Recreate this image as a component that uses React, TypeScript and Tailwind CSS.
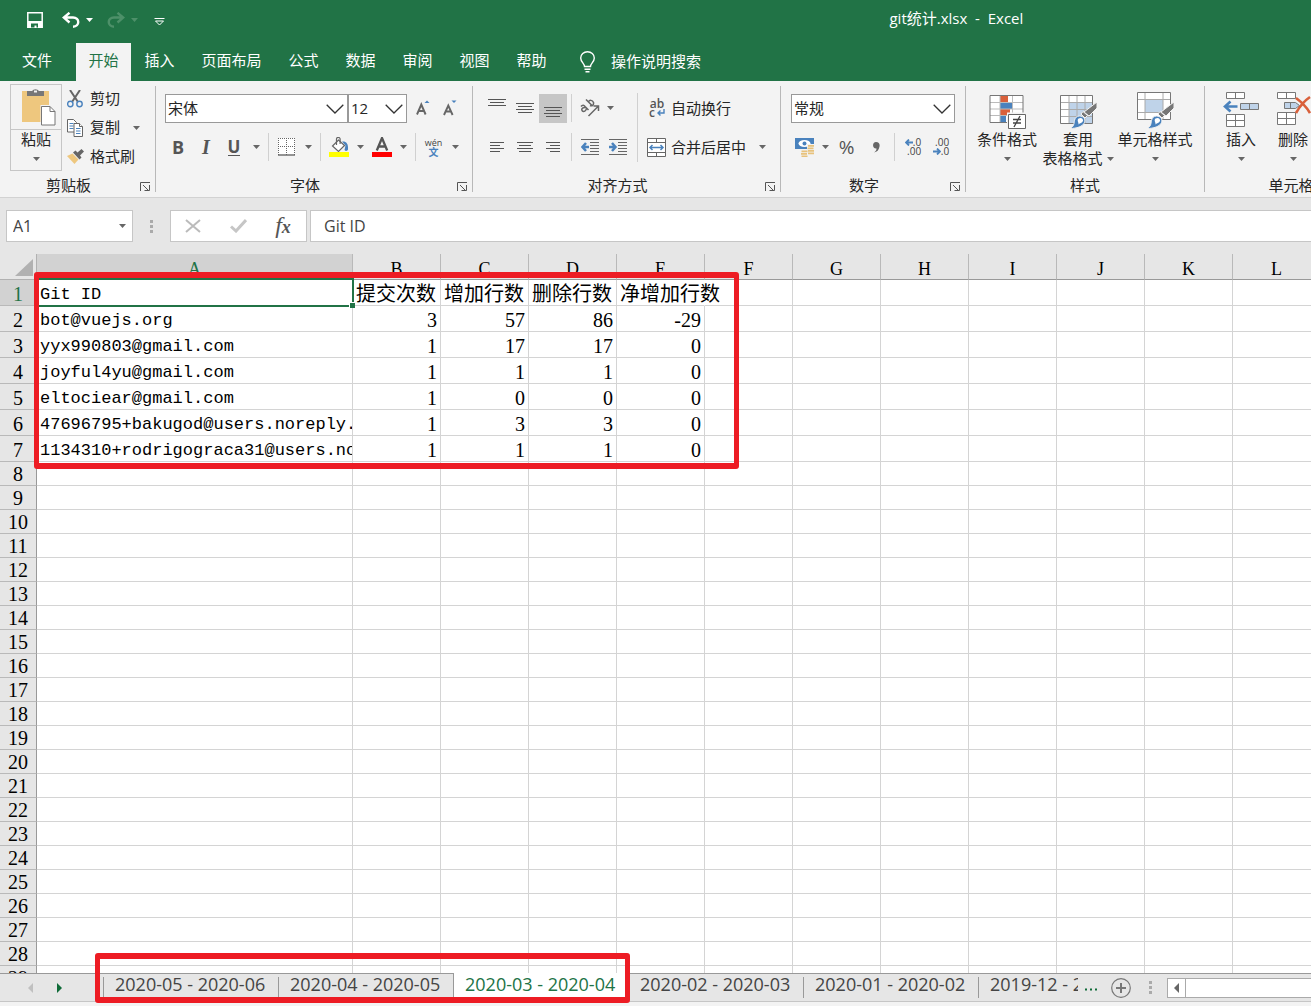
import { ReactNode } from "react";
import clsx from "clsx";

interface IChildren {
  children?: ReactNode;
}

interface IButtonProps extends IChildren {
  label: string;
  className?: string;
}

const COLUMNS = ["A", "B", "C", "D", "E", "F", "G", "H", "I", "J", "K", "L"];

const ROWS: string[][] = [
  ["Git ID", "提交次数", "增加行数", "删除行数", "净增加行数"],
  ["bot@vuejs.org", "3", "57", "86", "-29"],
  ["yyx990803@gmail.com", "1", "17", "17", "0"],
  ["joyful4yu@gmail.com", "1", "1", "1", "0"],
  ["eltociear@gmail.com", "1", "0", "0", "0"],
  ["47696795+bakugod@users.noreply.github.com", "1", "3", "3", "0"],
  ["1134310+rodrigograca31@users.noreply.github.com", "1", "1", "1", "0"],
];

const ROW_COUNT = 29;

const SHEETS = [
  "2020-05 - 2020-06",
  "2020-04 - 2020-05",
  "2020-03 - 2020-04",
  "2020-02 - 2020-03",
  "2020-01 - 2020-02",
];

const ACTIVE_SHEET = 2;

const MENU = ["公式", "数据", "审阅", "视图", "帮助"];

/* ---------- small pieces ---------- */

const CaretIcon = () => (
  <svg width="7" height="4" viewBox="0 0 7 4" className="shrink-0" fill="currentColor">
    <path d="M0 0h7L3.5 4z" />
  </svg>
);

const Caret = ({ label }: { label: string }) => (
  <button aria-label={label} className="flex h-7 w-3 shrink-0 items-center justify-center text-[#666]">
    <CaretIcon />
  </button>
);

const IconButton = ({ label, className, children }: IButtonProps) => (
  <button aria-label={label} className={clsx("flex h-7 shrink-0 items-center justify-center", className ?? "w-[31px]")}>
    {children}
  </button>
);

const Divider = ({ className }: { className?: string }) => (
  <span className={clsx("h-7 w-px shrink-0 bg-[#d0d0d0]", className ?? "mr-0.5 ml-1.5")} />
);

const Launcher = ({ label }: { label: string }) => (
  <button aria-label={label} className="mr-0.5 flex h-4 w-4 items-center justify-center pt-0.5">
    <svg width="10" height="9" viewBox="0 0 10 9" fill="none" stroke="#555">
      <path d="M.5 9V.5H10" />
      <path d="M3 3l5 5M9.500 3v5.500H4.500" />
    </svg>
  </button>
);

interface IGroupProps extends IChildren {
  title: string;
  className: string;
  launcher?: boolean;
}

const Group = ({ title, className, launcher, children }: IGroupProps) => (
  <section className={clsx("flex shrink-0 flex-col", className)}>
    <div className="h-24">{children}</div>
    <div className="flex h-4 items-center">
      <h2 className="flex-1 text-center text-[15px] leading-4">{title}</h2>
      {launcher && <Launcher label={`${title}设置`} />}
    </div>
  </section>
);

const GroupLine = () => <span className="mt-[5px] h-[106px] w-px shrink-0 bg-[#b8b8b8]" />;

interface IComboProps {
  label: string;
  value: string;
  className: string;
}

const Combo = ({ label, value, className }: IComboProps) => (
  <div className={clsx("relative shrink-0", className)}>
    <select
      aria-label={label}
      defaultValue={value}
      className="h-[29px] w-full appearance-none rounded-none border border-[#999] bg-white px-0.5 text-[15px] leading-5"
    >
      <option>{value}</option>
    </select>
    <svg
      width="18"
      height="10"
      viewBox="0 0 18 10"
      fill="none"
      stroke="#333"
      strokeWidth="1.300"
      className="pointer-events-none absolute top-2.5 right-1"
    >
      <path d="M.7.7L9 9 17.300.7" />
    </svg>
  </div>
);

/* ---------- title bar and tabs ---------- */

const TitleBar = () => (
  <header className="flex h-10 shrink-0 items-center bg-[#217346] text-white">
    <div className="flex w-[68%] shrink-0 items-center pl-[27px]">
      <button aria-label="保存">
        <svg width="16" height="16" viewBox="0 0 16 16" fill="none" stroke="#fff" strokeWidth="1.500">
          <path d="M.8.8h14.400v14.400H.8z" />
          <path d="M1 9.800h14" strokeWidth="1.600" />
          <path d="M1 10h14v5.500H1z" fill="#fff" stroke="none" />
          <path d="M4 11.500h7v4H9.500v-2h-2v2H4z" fill="#217346" stroke="none" />
        </svg>
      </button>
      <button aria-label="撤消" className="ml-[19px]">
        <svg width="18" height="16" viewBox="0 0 18 16" fill="none" stroke="#fff" strokeWidth="2.400">
          <path d="M7.500.8L1.800 5.500l5.700 5M2 5.500h9c7 0 7 9 0 9.200" />
        </svg>
      </button>
      <button aria-label="撤消列表" className="ml-1.5">
        <CaretIcon />
      </button>
      <button aria-label="恢复" className="ml-[14px] text-[#4d9069]">
        <svg width="18" height="16" viewBox="0 0 18 16" fill="none" stroke="currentColor" strokeWidth="2.400">
          <path d="M10.500.8l5.700 4.700-5.700 5M16 5.500H7c-7 0-7 9 0 9.200" />
        </svg>
      </button>
      <button aria-label="恢复列表" className="ml-1.5 text-[#4d9069]">
        <CaretIcon />
      </button>
      <button aria-label="自定义快速访问工具栏" className="ml-4 pt-1">
        <svg width="11" height="8" viewBox="0 0 11 8" fill="none" stroke="#fff">
          <path d="M.5.500h10M1.500 3h8l-4 4z" />
        </svg>
      </button>
    </div>
    <h1 className="-mt-1 -ml-0.5 text-[15px] whitespace-pre">{"git统计.xlsx  -  Excel"}</h1>
  </header>
);

const MenuTab = ({ name, className }: { name: string; className?: string }) => (
  <button className={clsx("h-[38px] shrink-0 pb-1 whitespace-nowrap", className ?? "w-[57px]")}>{name}</button>
);

const MenuBar = () => (
  <nav className="flex h-[41px] shrink-0 items-end bg-[#217346] text-[15px] text-white">
    <MenuTab name="文件" className="mr-0.5 w-[74px]" />
    <MenuTab name="开始" className="w-[55px] bg-[#f3f3f3] text-[#217346]" />
    <MenuTab name="插入" />
    <MenuTab name="页面布局" className="w-[87px]" />
    {MENU.map((name) => (
      <MenuTab key={name} name={name} />
    ))}
    <button className="ml-5 flex h-[38px] items-center gap-4 pb-px whitespace-nowrap">
      <svg width="15" height="22" viewBox="0 0 15 22" fill="none" stroke="#fff" strokeWidth="1.400">
        <path d="M4.500 15.500c0-3-3.800-4.500-3.800-8.500a6.800 6.300 0 0 1 13.600 0c0 4-3.800 5.500-3.800 8.500z" />
        <path d="M4.500 18.200h6M5.500 20.800h4" />
      </svg>
      操作说明搜索
    </button>
  </nav>
);

/* ---------- ribbon groups ---------- */

const Clipboard = () => (
  <Group title="剪贴板" launcher className="w-[155px]">
    <div className="flex pt-[3px] pl-2.5">
      <button className="flex h-[87px] w-[52px] flex-col items-center border border-[#c6c6c6] text-[15px]">
        <span className="flex h-[45px] w-full items-center justify-center border-b border-[#c6c6c6]">
          <svg width="34" height="38" viewBox="0 0 34 38" className="ml-1.5">
            <path d="M0 3h27v31H0z" fill="#eec77e" />
            <path d="M5 3h5a4 3.500 0 0 1 7 0h5v5H5z" fill="#777" />
            <path d="M12 2.500h3v2h-3z" fill="#f3f3f3" />
            <path d="M18.500 17H29l5.500 5.500V38h-16z" fill="#f3f3f3" />
            <path d="M19.500 18.500h8.500l5 5v13.500H19.500z" fill="#fff" stroke="#777" />
            <path d="M28 18.500v5h5" fill="none" stroke="#777" />
          </svg>
        </span>
        <span className="leading-[19px]">粘贴</span>
        <span className="mt-2 text-[#666]">
          <CaretIcon />
        </span>
      </button>
      <div className="flex flex-col pl-[5px] text-[15px]">
        <button className="flex h-[29px] items-center gap-[7px]">
          <svg width="16" height="18" viewBox="0 0 16 18" fill="none">
            <path d="M3 0l8 12M13 0L5 12" stroke="#666" strokeWidth="2" />
            <circle cx="3.300" cy="14" r="2.700" stroke="#4a82bd" strokeWidth="1.400" />
            <circle cx="12.500" cy="14" r="2.700" stroke="#4a82bd" strokeWidth="1.400" />
          </svg>
          剪切
        </button>
        <div className="flex h-[29px] items-center">
          <button className="flex items-center gap-[7px]">
            <svg width="16" height="18" viewBox="0 0 16 18" fill="#fff" stroke="#666">
              <path d="M.5.500h6l3 3v9.500h-9z" />
              <path d="M2.500 4.500h4M2.500 7h4M2.500 9.500h4" stroke="#4a82bd" />
              <path d="M7 4.500h5.500l3 3v10H7z" />
              <path d="M12.500 4.500v3h3" />
              <path d="M9 9.500h4.500M9 12h4.500M9 14.500h4.500" stroke="#4a82bd" />
            </svg>
            复制
          </button>
          <span className="ml-2.5 flex">
            <Caret label="复制选项" />
          </span>
        </div>
        <button className="flex h-[29px] items-center gap-[6px]">
          <svg width="17" height="16" viewBox="0 0 17 16">
            <path d="M0 7l5.500-2.500 6 6L7.500 15z" fill="#eec77e" />
            <path d="M6 3.500l2.500-2 2 2L14.500 0 17 2.500l-4 4 1.500 2-2 2z" fill="#666" />
          </svg>
          格式刷
        </button>
      </div>
    </div>
  </Group>
);

const FontGroup = () => (
  <Group title="字体" launcher className="w-[316px]">
    <div className="flex h-[54px] items-center pl-[9px]">
      <Combo label="字体" value="宋体" className="w-[183px]" />
      <Combo label="字号" value="12" className="w-[59px]" />
      <IconButton label="增大字号" className="ml-0.5 w-7">
        <svg width="14" height="17" viewBox="0 0 14 17" fill="none">
          <path d="M1 14.500L5.300 4.500 9.600 14.500M2.500 11h5.600" stroke="#666" strokeWidth="1.900" />
          <path d="M8.500 3L11 .5 13.500 3z" fill="#4a82bd" />
        </svg>
      </IconButton>
      <IconButton label="减小字号" className="w-[26px]">
        <svg width="14" height="17" viewBox="0 0 14 17" fill="none">
          <path d="M1 15L5.300 5.500 9.600 15M2.500 11.500h5.600" stroke="#666" strokeWidth="1.900" />
          <path d="M8.500.5h5L11 3z" fill="#4a82bd" />
        </svg>
      </IconButton>
    </div>
    <div className="flex h-6 items-center pl-2">
      <IconButton label="加粗" className="w-7">
        <b className="text-[18px] text-[#555]">B</b>
      </IconButton>
      <IconButton label="倾斜" className="w-7">
        <i className="font-['Liberation_Serif',serif] text-[20px] font-bold text-[#555]">I</i>
      </IconButton>
      <IconButton label="下划线" className="mr-0.5 w-7">
        <span className="border-b border-[#555] text-[17px] leading-4 font-bold text-[#555]">U</span>
      </IconButton>
      <Caret label="下划线样式" />
      <Divider />
      <IconButton label="边框">
        <svg width="17" height="18" viewBox="0 0 17 18" fill="none" stroke="#666">
          <path d="M0 0h17v17H0z" fill="#fff" stroke="none" />
          <path d="M0 .5h17M.5 0v17M16.500 0v17M0 8.500h17M8.500 0v17" strokeDasharray="1 1" />
          <path d="M0 17h17" strokeWidth="1.400" />
        </svg>
      </IconButton>
      <Caret label="边框样式" />
      <Divider />
      <IconButton label="填充颜色">
        <svg width="20" height="20" viewBox="0 0 20 20" fill="none">
          <path d="M9.500 3l6 5.500-6 6-6-5.500z" fill="#fff" stroke="#666" strokeWidth="1.200" />
          <path d="M7.500 8V2a1.800 1.600 0 0 1 3.600 0v5" stroke="#666" strokeWidth="1.200" />
          <path d="M13 4.500c4-.5 6.500 2 6 8-1 2-2.500 1.500-3.500.5l1-4.500z" fill="#4a82bd" />
          <path d="M0 15h20v5H0z" fill="#ff0" />
        </svg>
      </IconButton>
      <Caret label="填充颜色列表" />
      <IconButton label="字体颜色">
        <svg width="20" height="20" viewBox="0 0 20 20" fill="none">
          <path d="M4.800 13.500L10 1l5.200 12.500M6.500 9.500h7" stroke="#555" strokeWidth="2.300" />
          <path d="M0 15h20v5H0z" fill="#f00" />
        </svg>
      </IconButton>
      <Caret label="字体颜色列表" />
      <Divider />
      <IconButton label="拼音">
        <span className="flex flex-col items-center text-[9px] leading-[9px] text-[#444]">
          <span>wén</span>
          <span className="text-[10px] leading-[10px] font-bold text-[#4a82bd]">文</span>
        </span>
      </IconButton>
      <Caret label="拼音选项" />
    </div>
  </Group>
);

const LinesIcon = ({ d }: { d: string }) => (
  <svg width="28" height="29" viewBox="0 0 28 29" fill="none" stroke="#555">
    <path d={d} />
  </svg>
);

const IndentIcon = ({ arrow }: { arrow: string }) => (
  <svg width="18" height="17" viewBox="0 0 18 17" fill="none" stroke="#666">
    <path d="M0 .5h18M9 3.500h9M9 6.500h9M9 9.500h9M9 12.500h9M0 15.500h18" />
    <path d={arrow} stroke="#4a82bd" strokeWidth="2.500" />
  </svg>
);

const AlignGroup = () => (
  <Group title="对齐方式" launcher className="w-[307px]">
    <div className="flex pl-2.5">
      <div className="flex flex-col">
        <div className="flex h-[54px] items-center">
          <IconButton label="顶端对齐" className="w-7">
            <LinesIcon d="M5 5.500h18M7 8.500h14M5 11.500h18" />
          </IconButton>
          <IconButton label="垂直居中" className="w-7">
            <LinesIcon d="M5 9.500h18M7 12.500h14M5 15.500h18M7 18.500h14" />
          </IconButton>
          <button aria-label="底端对齐" className="flex h-[29px] w-7 bg-[#c6c6c6]">
            <LinesIcon d="M5 13.500h18M7 16.500h14M5 19.500h18M7 22.500h14" />
          </button>
          <Divider className="mx-1" />
          <IconButton label="方向" className="w-7">
            <svg width="20" height="18" viewBox="0 0 20 18" fill="none" stroke="#666" strokeWidth="1.500">
              <path d="M1 7.500c1.500-2 3-1.500 4 0l3.500 3.500M6 8.500c-3-.5-5 1-4 3 1.500 2 4.500.500 4.500-2.500" />
              <path d="M6 .5l6.500 6.500M8.500 3c1-2.500 4-2 5 .500.500 2.500-1.500 4-3.500 3" />
              <path d="M8.500 17L18 7.500M13.500 7H18.500v5" />
            </svg>
          </IconButton>
          <Caret label="方向选项" />
        </div>
        <div className="flex h-6 items-center">
          <IconButton label="左对齐" className="w-7">
            <LinesIcon d="M7 9.500h14M7 12.500h10M7 15.500h14M7 18.500h10" />
          </IconButton>
          <IconButton label="居中" className="w-7">
            <LinesIcon d="M6 9.500h16M8 12.500h12M6 15.500h16M8 18.500h12" />
          </IconButton>
          <IconButton label="右对齐" className="w-7">
            <LinesIcon d="M7 9.500h14M11 12.500h10M7 15.500h14M11 18.500h10" />
          </IconButton>
          <Divider className="mx-1" />
          <IconButton label="减少缩进量" className="w-7">
            <IndentIcon arrow="M8 8H1.500M5 4L1.500 8 5 12" />
          </IconButton>
          <IconButton label="增加缩进量" className="w-7">
            <IndentIcon arrow="M0 8h6.500M3 4l3.500 4L3 12" />
          </IconButton>
        </div>
      </div>
      <span className="mt-3 ml-[5px] h-[69px] w-px bg-[#d0d0d0]" />
      <div className="flex flex-col pl-[9px] text-[15px]">
        <button className="flex h-[54px] items-center gap-1.5">
          <span className="flex w-[18px] flex-col pl-0.5 text-[12px] leading-[9px] font-semibold text-[#555]">
            <span>ab</span>
            <span className="flex items-center gap-0.5">
              c
              <svg width="8" height="7" viewBox="0 0 8 7" fill="none" stroke="#4a82bd" strokeWidth="1.400">
                <path d="M7 0v4H1M3.500 1.500L1 4l2.500 2.500" />
              </svg>
            </span>
          </span>
          自动换行
        </button>
        <div className="flex h-6 items-center">
          <button className="flex items-center gap-[5px] whitespace-nowrap">
            <svg width="19" height="19" viewBox="0 0 19 19" fill="none" stroke="#666">
              <path d="M.5.500h18v18H.5z" fill="#fff" />
              <path d="M0 4.500h19M0 14.500h19M9.500 0v4M9.500 15v4" />
              <path d="M3 9.500h13M5.500 7L3 9.500 5.500 12M13.500 7l2.500 2.500-2.500 2.500" stroke="#4a82bd" strokeWidth="1.500" />
            </svg>
            合并后居中
          </button>
          <span className="ml-2.5 flex">
            <Caret label="合并选项" />
          </span>
        </div>
      </div>
    </div>
  </Group>
);

const NumberGroup = () => (
  <Group title="数字" launcher className="w-[184px]">
    <div className="flex h-[54px] items-center pl-2.5">
      <Combo label="数字格式" value="常规" className="w-[164px]" />
    </div>
    <div className="flex h-6 items-center pl-2.5">
      <IconButton label="会计数字格式" className="w-7">
        <svg width="20" height="20" viewBox="0 0 20 20">
          <path d="M0 1h19v11H0z" fill="#4a82bd" />
          <ellipse cx="9.500" cy="6.500" rx="6" ry="3.500" fill="#fff" />
          <circle cx="9.500" cy="6.500" r="2" fill="#4a82bd" />
          <path d="M12 7h8v10h-6v3H6v-7h6z" fill="#f3f3f3" />
          <path d="M13 8h6v1.800h-6zM12.500 10.500h6v1.800h-6zM13 13h6v1.800h-6zM13 15.500h6v1.800h-6zM6.500 13.500h6v1.800h-6zM6 16h6v1.800H6zM6.500 18.500h6V20h-6z" fill="#e8c27c" />
        </svg>
      </IconButton>
      <Caret label="会计格式列表" />
      <IconButton label="百分比样式">
        <span className="text-[19px] text-[#555]">%</span>
      </IconButton>
      <IconButton label="千位分隔样式" className="w-7">
        <svg width="7" height="11" viewBox="0 0 7 11" fill="#666">
          <path d="M3 0c3 0 4 2 3.500 4.500C6 8 4 10 1 10.500c2-1.500 2.500-2.500 2.500-4C-1 7-1 0 3 0z" />
        </svg>
      </IconButton>
      <Divider className="mx-1" />
      <IconButton label="增加小数位数" className="w-7">
        <span className="flex flex-col items-end text-[10px] leading-[9px] text-[#444]">
          <span className="flex items-center">
            <svg width="8" height="7" viewBox="0 0 8 7" fill="none" stroke="#4a82bd" strokeWidth="1.800">
              <path d="M8 3.500H1.500M4 .5l-3 3 3 3" />
            </svg>
            .0
          </span>
          <span>.00</span>
        </span>
      </IconButton>
      <IconButton label="减少小数位数" className="w-7">
        <span className="flex flex-col items-end text-[10px] leading-[9px] text-[#444]">
          <span>.00</span>
          <span className="flex items-center">
            <svg width="8" height="7" viewBox="0 0 8 7" fill="none" stroke="#4a82bd" strokeWidth="1.800">
              <path d="M0 3.500h6.500M4 .5l3 3-3 3" />
            </svg>
            .0
          </span>
        </span>
      </IconButton>
    </div>
  </Group>
);

interface IBigButtonProps extends IChildren {
  text: string;
  second?: string;
  className: string;
}

const BigButton = ({ text, second, className, children }: IBigButtonProps) => (
  <button className={clsx("flex shrink-0 flex-col items-center text-[15px] whitespace-nowrap", className)}>
    <span className="flex h-[41px] items-center pl-0.5">{children}</span>
    <span className="leading-[19px]">{text}</span>
    <span className="flex h-[19px] items-center gap-1 leading-[19px]">
      {second}
      <span className="text-[#666]">
        <CaretIcon />
      </span>
    </span>
  </button>
);

const Brush = () => (
  <>
    <path d="M37 11v6l-8 8-5-4z" fill="#777" stroke="#f3f3f3" />
    <path d="M23 20.500l4.500 4-2.500 2.500-4-4z" fill="#777" stroke="#f3f3f3" />
    <path d="M19.500 25c4 0 6.500 3 5 6.500-1.500 4-8 6-14.500 6 4-2 4-5 4.500-8 .5-2.500 2-4.500 5-4.500z" fill="#4a82bd" stroke="#f3f3f3" />
    <path d="M18.500 27.500c3-1.500 5 .500 4.500 2.500-1 2-3 2-4.500 3.500.5-2-2-4 0-6z" fill="#fff" />
  </>
);

const StylesGroup = () => (
  <Group title="样式" className="w-[238px]">
    <div className="flex pt-2 pl-[5px]">
      <BigButton text="条件格式" className="w-[72px]">
        <svg width="38" height="38" viewBox="0 0 38 38" fill="none">
          <path d="M1 4.500h33v27H1z" fill="#fff" />
          <path d="M11 5h8v6h-8zM11 18h10v7H11z" fill="#d9603b" />
          <path d="M11 11h12v7H11zM11 25h6v6h-6z" fill="#4a82bd" />
          <path d="M1 11.500h33M1 18h33M1 24.500h33M11 5v26M23.500 5v26" stroke="#bbb" />
          <path d="M1 4.500h33v27H1z" stroke="#777" />
          <path d="M18 21.500h20V38H18z" fill="#f3f3f3" />
          <path d="M19.500 23.500h17v14h-17z" fill="#fff" stroke="#666" />
          <path d="M24 28.500h8M24 32h8M31 25l-6 11" stroke="#444" strokeWidth="1.300" />
        </svg>
      </BigButton>
      <BigButton text="套用" second="表格格式" className="w-[70px]">
        <svg width="38" height="38" viewBox="0 0 38 38" fill="none">
          <path d="M.5 4.500h32v28H.5z" fill="#fff" />
          <path d="M9 11.500h23v21H9z" fill="#bfd3e9" />
          <path d="M1 11.500h31M1 18.500h31M1 25.500h31M9 5v27M17 5v27M25 5v27" stroke="#aaa" />
          <path d="M.5 4.500h32v28H.5z" stroke="#777" />
          <Brush />
        </svg>
      </BigButton>
      <BigButton text="单元格样式" className="w-[84px]">
        <svg width="38" height="38" viewBox="0 0 38 38" fill="none">
          <path d="M.5 1.500h33v27H.5z" fill="#fff" />
          <path d="M8 9h18v12H8z" fill="#bfd3e9" />
          <path d="M1 8.500h33M1 21.500h33M8 2v26M26 2v26" stroke="#aaa" />
          <path d="M.5 1.500h33v27H.5z" stroke="#777" />
          <Brush />
        </svg>
      </BigButton>
    </div>
  </Group>
);

const CellsGroup = () => (
  <Group title="单元格" className="w-[172px]">
    <div className="flex pt-2 pl-2.5">
      <BigButton text="插入" className="w-[52px]">
        <svg width="38" height="38" viewBox="1 1 38 38" fill="#fff" stroke="#777">
          <path d="M4.500 2.500h18v6h-18zM13.500 2.500v6M4.500 24.500h18v12h-18zM13.500 24.500v12M4.500 30.500h18" />
          <path d="M18.500 13.500h18v6h-18zM27.500 13.500v6" fill="#bfd3e9" />
          <path d="M15.500 16.500H3M8.500 11.500l-5.500 5 5.500 5" fill="none" stroke="#4a82bd" strokeWidth="2.600" />
        </svg>
      </BigButton>
      <BigButton text="删除" className="w-[52px]">
        <svg width="36" height="38" viewBox="0 0 36 38" fill="#fff" stroke="#777">
          <path d="M1.500 1.500h18v6h-18zM10.500 1.500v6M1.500 21.500h18v12h-18zM10.500 21.500v12M1.500 27.500h18" />
          <path d="M8.500 11.500h11l4 3-4 3h-11zM14.500 11.500v6" fill="#bfd3e9" />
          <path d="M20 7c4 3 10 8 14 15M34 6c-6 4-10 9-14 16" fill="none" stroke="#d9603b" strokeWidth="2.600" />
        </svg>
      </BigButton>
    </div>
  </Group>
);

const Ribbon = () => (
  <div className="flex h-[117px] shrink-0 overflow-hidden border-b border-[#d2d2d2] bg-[#f3f3f3]">
    <Clipboard />
    <GroupLine />
    <FontGroup />
    <GroupLine />
    <AlignGroup />
    <GroupLine />
    <NumberGroup />
    <GroupLine />
    <StylesGroup />
    <GroupLine />
    <CellsGroup />
  </div>
);

/* ---------- formula bar ---------- */

const Dots = () => (
  <svg width="3" height="13" viewBox="0 0 3 13" fill="#aaa" className="shrink-0">
    <path d="M0 0h3v3H0zM0 5h3v3H0zM0 10h3v3H0z" />
  </svg>
);

const FormulaBar = () => (
  <div className="flex h-14 shrink-0 items-center bg-[#e6e6e6] pl-1.5 text-[16px] text-[#444]">
    <div className="flex h-8 w-[127px] shrink-0 items-center border border-[#c6c6c6] bg-white pr-1">
      <input aria-label="名称框" defaultValue="A1" className="w-full min-w-0 px-1.5 outline-none" />
      <Caret label="名称列表" />
    </div>
    <span className="mx-[17px]">
      <Dots />
    </span>
    <div className="flex h-8 w-[137px] shrink-0 items-center border border-[#c6c6c6] bg-white">
      <IconButton label="取消" className="w-11">
        <svg width="16" height="14" viewBox="0 0 16 14" fill="none" stroke="#bbb" strokeWidth="2">
          <path d="M1 1l14 12M15 1L1 13" />
        </svg>
      </IconButton>
      <IconButton label="输入" className="w-[46px]">
        <svg width="17" height="14" viewBox="0 0 17 14" fill="none" stroke="#c6c6c6" strokeWidth="3">
          <path d="M1 7.500l5 4.500L16 1" />
        </svg>
      </IconButton>
      <IconButton label="插入函数" className="w-11">
        <i className="font-['Liberation_Serif',serif] text-[24px] leading-6 text-[#555]">
          f<span className="text-[18px] font-bold">x</span>
        </i>
      </IconButton>
    </div>
    <input
      aria-label="编辑栏"
      defaultValue="Git ID"
      className="ml-[3px] h-8 min-w-0 flex-1 border border-r-0 border-[#c6c6c6] bg-white px-[13px] outline-none"
    />
  </div>
);

/* ---------- sheet ---------- */

const Cell = ({ row, col }: { row: number; col: number }) => {
  const value = ROWS[row]?.[col] ?? "";
  const isNumber = row > 0 && col > 0;
  return (
    <td
      className={clsx(
        "border-r border-b border-[#d4d4d4] p-0 leading-5 whitespace-nowrap",
        row === 0 && col === 4 && "border-r-transparent",
        isNumber && value && "pt-0.5 pr-[3px] text-right font-['Liberation_Serif',serif] text-[20px]",
        row === 0 && col > 0 && "pt-0.5 pl-[3px] text-[20px]",
        col === 0 && value && "overflow-hidden pt-1 pl-[3px] font-['Liberation_Mono',monospace] text-[17px]",
      )}
    >
      {value}
    </td>
  );
};

const Sheet = () => (
  <main className="relative min-h-0 flex-1 bg-white">
    <div className="h-full overflow-hidden">
      <table className="w-[1321px] table-fixed border-separate border-spacing-0 text-black">
        <colgroup>
          <col className="w-[37px]" />
          <col className="w-[316px]" />
          {COLUMNS.slice(1).map((name) => (
            <col key={name} className="w-[88px]" />
          ))}
        </colgroup>
        <thead>
          <tr className="h-[26px] bg-[#e6e6e6] font-['Liberation_Serif',serif] text-[18px]">
            <td className="border-r border-b border-[#b1b1b1] p-0">
              <svg width="18" height="17" viewBox="0 0 18 17" fill="#b1b1b1" className="mt-0.5 ml-auto mr-[3px]">
                <path d="M18 0v17H0z" />
              </svg>
            </td>
            {COLUMNS.map((name) => (
              <th
                key={name}
                scope="col"
                className={clsx(
                  "border-r border-b border-r-[#b9b9b9] border-b-[#999] p-0 pt-1 leading-5 font-normal",
                  name === "A" && "bg-[#d2d2d2] text-[#217346]",
                )}
              >
                {name}
              </th>
            ))}
          </tr>
        </thead>
        <tbody>
          {Array.from({ length: ROW_COUNT }, (_, row) => (
            <tr key={row} className={row < ROWS.length ? "h-[26px]" : "h-6"}>
              <th
                scope="row"
                className={clsx(
                  "border-r border-b border-r-[#999] border-b-[#b9b9b9] p-0 font-['Liberation_Serif',serif] text-[20px] leading-5 font-normal",
                  row === 0 ? "bg-[#d2d2d2] text-[#217346]" : "bg-[#e6e6e6]",
                  row < ROWS.length && "pt-0.5",
                )}
              >
                {row + 1}
              </th>
              {COLUMNS.map((name, col) => (
                <Cell key={name} row={row} col={col} />
              ))}
            </tr>
          ))}
        </tbody>
      </table>
    </div>
    {/* selection frame of A1 */}
    <div className="absolute top-6 left-9 h-[29px] w-[318px] border-2 border-[#217346]">
      <span className="absolute -right-[3px] -bottom-[3px] h-1.5 w-1.5 border-t border-l border-white bg-[#217346]" />
    </div>
    <div className="absolute top-[18px] left-[34px] h-[197px] w-[705px] rounded-[3px] border-x-[5px] border-y-[6px] border-[#ed1c24]" />
  </main>
);

/* ---------- sheet tabs ---------- */

const SheetTabs = () => (
  <footer className="relative shrink-0 border-b-4 border-[#f3f3f3] bg-[#e6e6e6]">
    <div className="flex h-[29px] border-t border-b border-t-[#999] border-b-[#c6c6c6]">
      <div className="flex w-[103px] shrink-0 items-center pl-7">
        <button aria-label="上一个" className="text-[#c0c0c0]">
          <svg width="5" height="10" viewBox="0 0 5 10" fill="currentColor">
            <path d="M5 0v10L0 5z" />
          </svg>
        </button>
        <button aria-label="下一个" className="ml-6 text-[#0f6b38]">
          <svg width="5" height="10" viewBox="0 0 5 10" fill="currentColor">
            <path d="M0 0v10l5-5z" />
          </svg>
        </button>
      </div>
      <div className="flex min-w-0 shrink text-[18px] text-[#444]">
        {SHEETS.map((name, index) => (
          <button
            key={name}
            className={clsx(
              "w-[175px] shrink-0 border-l pl-[11px] text-left whitespace-nowrap",
              index === ACTIVE_SHEET
                ? "-mt-px h-[25px] border-[#999] bg-white pb-1 leading-5 text-[#217346]"
                : "mt-[3px] h-[21px] pb-[7px] leading-[14px]",
              index === ACTIVE_SHEET + 1 ? "border-transparent" : "border-[#999]",
            )}
          >
            {name}
          </button>
        ))}
        <button className="mt-[3px] h-[21px] w-[100px] shrink-0 overflow-hidden border-l border-[#999] pb-[7px] pl-[11px] text-left leading-[14px] whitespace-nowrap">
          2019-12 - 2020-01
        </button>
      </div>
      <button aria-label="更多工作表" className="ml-1.5 flex shrink-0 items-center pt-1">
        <svg width="15" height="3" viewBox="0 0 15 3" fill="#0f6b38">
          <path d="M1 .5h2v2H1zM6 .5h2v2H6zM11 .5h2v2h-2z" />
        </svg>
      </button>
      <button aria-label="新工作表" className="ml-3 flex shrink-0 items-center">
        <svg width="20" height="20" viewBox="0 0 20 20" fill="none" stroke="#777">
          <circle cx="10" cy="10" r="9.300" strokeWidth="1.200" />
          <path d="M10 5v10M5 10h10" strokeWidth="2" />
        </svg>
      </button>
      <span className="mr-[15px] ml-[18px] flex items-center">
        <Dots />
      </span>
      <div className="mt-1 flex h-5 min-w-0 flex-1 border border-r-0 border-[#aaa] bg-white">
        <button aria-label="向左滚动" className="flex w-[18px] shrink-0 items-center justify-center border-r border-[#aaa]">
          <svg width="5" height="10" viewBox="0 0 5 10" fill="#666">
            <path d="M5 0v10L0 5z" />
          </svg>
        </button>
      </div>
    </div>
    <div className="absolute -top-5 left-[95px] h-[50px] w-[535px] rounded-[3px] border-x-[5px] border-y-[6px] border-[#ed1c24]" />
  </footer>
);

const App = () => {
  return (
    <div className="flex h-screen flex-col overflow-hidden bg-[#e6e6e6] font-['Open_Sans','Noto_Sans_CJK_SC',sans-serif] text-[#262626]">
      <TitleBar />
      <MenuBar />
      <Ribbon />
      <FormulaBar />
      <Sheet />
      <SheetTabs />
    </div>
  );
};

export default App;
